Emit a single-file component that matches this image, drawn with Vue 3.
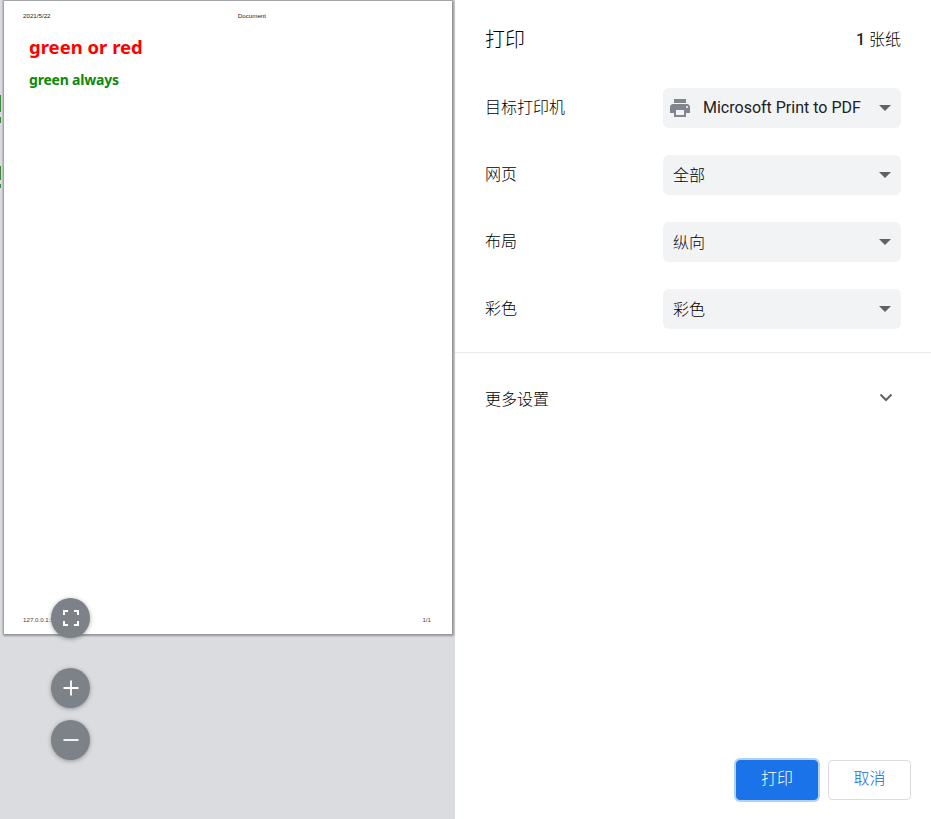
<script setup>
const rows = [
  { label: '目标打印机', value: 'Microsoft Print to PDF', printer: true },
  { label: '网页', value: '全部' },
  { label: '布局', value: '纵向' },
  { label: '彩色', value: '彩色' },
]
</script>

<template>
  <div class="app">
    <section class="preview">
      <i class="sliver s1"></i>
      <i class="sliver s2"></i>
      <i class="sliver s3"></i>
      <i class="sliver s4"></i>
      <div class="sheet">
        <div class="meta">
          <span class="date">2021/5/22</span>
          <span class="doc">Document</span>
        </div>
        <h1>green or red</h1>
        <h2>green always</h2>
        <div class="meta foot">
          <span class="url">127.0.0.1:5500/test.html</span>
          <span class="pg">1/1</span>
        </div>
      </div>
      <button class="fab fit" aria-label="fit">
        <svg width="20" height="20" viewBox="0 0 20 20" fill="none" stroke="#fff" stroke-width="2">
          <path d="M3 7V3h4M13 3h4v4M17 13v4h-4M7 17H3v-4" />
        </svg>
      </button>
      <button class="fab plus" aria-label="zoom in">
        <svg width="20" height="20" viewBox="0 0 20 20" fill="none" stroke="#fff" stroke-width="1.800">
          <path d="M10 2.500v15M2.500 10h15" />
        </svg>
      </button>
      <button class="fab minus" aria-label="zoom out">
        <svg width="20" height="20" viewBox="0 0 20 20" fill="none" stroke="#fff" stroke-width="1.800">
          <path d="M2.500 10h15" />
        </svg>
      </button>
    </section>

    <aside class="panel">
      <header class="head">
        <span class="title">打印</span>
        <span class="count"><b>1</b> <span class="thin">张纸</span></span>
      </header>
      <div class="rows">
        <div v-for="r in rows" :key="r.label" class="row">
          <span class="label">{{ r.label }}</span>
          <div class="select">
            <svg v-if="r.printer" class="printer" width="24" height="24" viewBox="0 0 24 24" fill="#80868b">
              <path d="M19 8H5c-1.660 0-3 1.340-3 3v6h4v4h12v-4h4v-6c0-1.660-1.340-3-3-3zm-3 11H8v-5h8v5zm3-7c-.55 0-1-.45-1-1s.45-1 1-1 1 .45 1 1-.45 1-1 1zm-1-9H6v4h12V3z" />
            </svg>
            <span class="val" :class="{ thin: !r.printer }">{{ r.value }}</span>
            <i class="caret"></i>
          </div>
        </div>
      </div>
      <div class="more">
        <span class="label">更多设置</span>
        <svg class="chev" width="16" height="16" viewBox="0 0 16 16" fill="none" stroke="#5f6368" stroke-width="2">
          <path d="M2.500 4.500l5.500 5.500 5.500-5.500" />
        </svg>
      </div>
      <footer class="actions">
        <button class="btn primary"><span>打印</span></button>
        <button class="btn ghost"><span>取消</span></button>
      </footer>
    </aside>
  </div>
</template>

<style scoped>
.app {
  display: flex;
  width: 931px;
  height: 819px;
  overflow: hidden;
  background: #fff;
  font-family: Roboto, "Noto Sans CJK SC", sans-serif;
  color: #202124;
}
.preview {
  position: relative;
  width: 455px;
  flex: none;
  background: #dadce0;
  padding: 1px 3px 0 4px;
  box-sizing: border-box;
}
.sliver { position: absolute; left: 0; width: 1px; background: #3a8a3a; }
.s1 { top: 95px; height: 17px; }
.s2 { top: 117px; height: 6px; }
.s3 { top: 166px; height: 14px; }
.s4 { top: 184px; height: 4px; }
.sheet {
  position: relative;
  height: 633px;
  box-sizing: border-box;
  background: #fff;
  box-shadow: 0 0 2px 1px #8f9093, 1px 1px 2px 1px #a8a9ad;
  padding: 11px 21px 10px 19px;
  display: flex;
  flex-direction: column;
}
.meta {
  display: flex;
  justify-content: space-between;
  font-family: "Liberation Sans", sans-serif;
  font-size: 6.200px;
  line-height: 8px;
  color: #222;
}
.doc { margin-right: 165px; }
.foot { margin-top: auto; color: #5a3a3a; }
h1, h2 {
  margin: 0 0 0 6px;
  font-family: "Noto Sans", sans-serif;
  font-weight: 700;
}
h1 { margin-top: 14px; font-size: 18.500px; line-height: 26px; color: #f00; }
h2 { margin-top: 10px; font-size: 14px; line-height: 20px; letter-spacing: -.2px; color: #0a8a0a; }

.fab {
  position: absolute;
  left: 51px;
  width: 39px;
  height: 40px;
  padding: 0;
  border: 0;
  border-radius: 50%;
  background: #7d8288;
  box-shadow: 0 1px 4px rgba(60, 64, 67, .45);
  display: flex;
  align-items: center;
  justify-content: center;
}
.fit { top: 598px; }
.plus { top: 668px; }
.minus { top: 720px; }

.panel {
  flex: 1;
  min-width: 0;
  display: flex;
  flex-direction: column;
  font-size: 16px;
}
.head {
  display: flex;
  justify-content: space-between;
  align-items: center;
  padding: 25px 30px 0 30px;
  height: 28px;
}
.title { font-size: 20px; line-height: 28px; padding-top: 2px; font-weight: 300; color: #000; }
.count { padding-bottom: 2px; }
.count b { font-weight: 500; }
.thin { font-weight: 300; color: #000; }
.rows {
  margin-top: 35px;
  padding: 0 30px 23px 30px;
  border-bottom: 1px solid #e8eaed;
  display: flex;
  flex-direction: column;
  gap: 27px;
}
.row {
  display: flex;
  justify-content: space-between;
  align-items: center;
  height: 40px;
}
.label { padding-bottom: 4px; font-weight: 300; color: #000; }
.more .label { padding-bottom: 2px; }
.select {
  position: relative;
  box-sizing: border-box;
  width: 238px;
  height: 40px;
  border-radius: 6px;
  background: #f1f3f4;
  display: flex;
  align-items: center;
  padding: 0 10px;
}
.printer { margin-left: -5px; margin-right: 11px; flex: none; }
.val { white-space: nowrap; padding-bottom: 2px; }
.caret {
  position: absolute;
  right: 10px;
  top: 17px;
  width: 0;
  height: 0;
  border-left: 6px solid transparent;
  border-right: 6px solid transparent;
  border-top: 6px solid #5f6368;
}
.more {
  display: flex;
  justify-content: space-between;
  align-items: center;
  padding: 36px 30px 0 30px;
  height: 20px;
}
.chev { margin: -2px 7px 0 0; }
.actions {
  margin-top: auto;
  padding: 0 20px 19px 0;
  display: flex;
  justify-content: flex-end;
  gap: 10px;
}
.btn {
  box-sizing: border-box;
  height: 40px;
  border-radius: 4px;
  font: inherit;
  font-weight: 300;
  padding: 0 0 6px;
  cursor: pointer;
}
.primary {
  width: 82px;
  background: #1a73e8;
  color: #fff;
  border: 1px solid #1a73e8;
  box-shadow: 0 0 0 2px #b3d0f7;
}
.ghost {
  width: 83px;
  background: #fff;
  color: #0f66dc;
  border: 1px solid #dadce0;
}
</style>

<style>
html, body { margin: 0; background: #fff; }
</style>
